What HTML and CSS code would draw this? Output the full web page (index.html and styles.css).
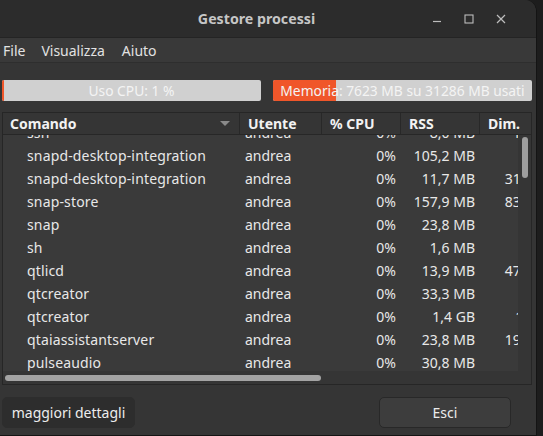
FILE: index.html
```html
<!DOCTYPE html>
<html lang="it">
<head>
<meta charset="utf-8">
<title>Gestore processi</title>
<link rel="stylesheet" href="styles.css">
</head>
<body>
<div class="window">
  <header class="titlebar">
    <div class="title">Gestore processi</div>
    <div class="controls">
      <span class="ctl"><svg width="10" height="10" viewBox="0 0 10 10"><path d="M1 7.5h8" stroke="#bdbdbd" stroke-width="1.2" fill="none"/></svg></span>
      <span class="ctl"><svg width="10" height="10" viewBox="0 0 10 10"><rect x="1" y="1" width="8" height="8" stroke="#bdbdbd" stroke-width="1.1" fill="none"/></svg></span>
      <span class="ctl"><svg width="10" height="10" viewBox="0 0 10 10"><path d="M1 1L9 9M9 1L1 9" stroke="#bdbdbd" stroke-width="1.2" fill="none"/></svg></span>
    </div>
  </header>
  <nav class="menubar">
    <span class="menu-item">File</span>
    <span class="menu-item">Visualizza</span>
    <span class="menu-item">Aiuto</span>
  </nav>
  <main class="content">
    <div class="meters">
      <div class="meter"><div class="fill" style="width:2px"></div><span class="meter-label">Uso CPU: 1 %</span></div>
      <div class="meter"><div class="fill" style="width:24.4%"></div><span class="meter-label">Memoria: 7623 MB su 31286 MB usati</span></div>
    </div>
    <div class="tree">
      <div class="thead">
        <div class="th th-cmd"><span>Comando</span><svg class="sort" width="10" height="5" viewBox="0 0 10 5"><path d="M0 0H10L5 5Z" fill="#8a8a8a"/></svg></div>
        <div class="th">Utente</div>
        <div class="th">% CPU</div>
        <div class="th">RSS</div>
        <div class="th th-last">Dim.</div>
      </div>
      <div class="scroller">
        <div class="viewport">
          <div class="rows">
            <div class="row"><span class="c-cmd">ssh</span><span class="c-user">andrea</span><span class="c-num">0%</span><span class="c-num">8,0 MB</span><span class="c-dim">16,7 MB</span></div>
            <div class="row"><span class="c-cmd">snapd-desktop-integration</span><span class="c-user">andrea</span><span class="c-num">0%</span><span class="c-num">105,2 MB</span><span class="c-dim">1,2 GB</span></div>
            <div class="row"><span class="c-cmd">snapd-desktop-integration</span><span class="c-user">andrea</span><span class="c-num">0%</span><span class="c-num">11,7 MB</span><span class="c-dim">311,8 MB</span></div>
            <div class="row"><span class="c-cmd">snap-store</span><span class="c-user">andrea</span><span class="c-num">0%</span><span class="c-num">157,9 MB</span><span class="c-dim">836,9 MB</span></div>
            <div class="row"><span class="c-cmd">snap</span><span class="c-user">andrea</span><span class="c-num">0%</span><span class="c-num">23,8 MB</span><span class="c-dim">1,8 GB</span></div>
            <div class="row"><span class="c-cmd">sh</span><span class="c-user">andrea</span><span class="c-num">0%</span><span class="c-num">1,6 MB</span><span class="c-dim">2,8 MB</span></div>
            <div class="row"><span class="c-cmd">qtlicd</span><span class="c-user">andrea</span><span class="c-num">0%</span><span class="c-num">13,9 MB</span><span class="c-dim">472,3 MB</span></div>
            <div class="row"><span class="c-cmd">qtcreator</span><span class="c-user">andrea</span><span class="c-num">0%</span><span class="c-num">33,3 MB</span><span class="c-dim">2,1 GB</span></div>
            <div class="row"><span class="c-cmd">qtcreator</span><span class="c-user">andrea</span><span class="c-num">0%</span><span class="c-num">1,4 GB</span><span class="c-dim">17,9 GB</span></div>
            <div class="row"><span class="c-cmd">qtaiassistantserver</span><span class="c-user">andrea</span><span class="c-num">0%</span><span class="c-num">23,8 MB</span><span class="c-dim">195,6 MB</span></div>
            <div class="row"><span class="c-cmd">pulseaudio</span><span class="c-user">andrea</span><span class="c-num">0%</span><span class="c-num">30,8 MB</span><span class="c-dim">1,3 GB</span></div>
          </div>
        </div>
        <div class="vtrough"><div class="vthumb"></div></div>
        <div class="htrough"><div class="hthumb"></div></div>
        <div class="corner"></div>
      </div>
    </div>
    <div class="actions">
      <button class="btn btn-flat">maggiori dettagli</button>
      <button class="btn btn-raised">Esci</button>
    </div>
  </main>
</div>
</body>
</html>
```

FILE: styles.css
```css
* { box-sizing: border-box; }
html, body { margin: 0; padding: 0; }
body {
  width: 543px;
  height: 436px;
  overflow: hidden;
  background: #1d1d1d;
  font-family: "Noto Sans", "DejaVu Sans", sans-serif;
  font-size: 14px;
  color: #e6e6e6;
}
.window {
  width: 537px;
  height: 436px;
  background: #353535;
  border-top-right-radius: 12px;
  border-right: 1px solid #141414;
  border-bottom: 1px solid #141414;
  overflow: hidden;
  display: flex;
  flex-direction: column;
}
.titlebar {
  height: 38px;
  flex: none;
  background: #2c2c2c;
  border-bottom: 1px solid #242424;
  display: flex;
  align-items: center;
}
.title {
  flex: 1;
  text-align: center;
  padding-left: 92px;
  font-weight: bold;
  font-size: 14.2px;
  color: #c6c6c6;
}
.controls {
  display: flex;
  margin-right: 19px;
}
.ctl {
  width: 32px;
  height: 30px;
  display: flex;
  align-items: center;
  justify-content: center;
}
.menubar {
  height: 25px;
  flex: none;
  background: #393939;
  border-bottom: 1px solid #2e2e2e;
  display: flex;
  align-items: center;
  padding-left: 3px;
  gap: 16px;
  color: #e2e2e2;
}
.menu-item:last-child { margin-left: 1px; }
.content {
  flex: 1;
  padding: 17px 4px 0 2px;
  display: flex;
  flex-direction: column;
}
.meters {
  display: flex;
  gap: 12px;
  height: 21px;
}
.meter {
  flex: 1;
  position: relative;
  background: #d0d0d0;
  border-radius: 2px;
  overflow: hidden;
  display: flex;
  align-items: center;
  justify-content: center;
}
.fill {
  position: absolute;
  left: 0;
  top: 0;
  bottom: 0;
  background: #f0562a;
}
.meter-label {
  position: relative;
  color: #f4f4f4;
  font-size: 13.8px;
}
.tree {
  margin-top: 11px;
  border: 1px solid #262626;
  background: #353535;
}
.thead {
  height: 22px;
  border-bottom: 1px solid #272727;
  display: grid;
  grid-template-columns: 237px 82px 79px 79px 1fr;
  font-weight: bold;
  color: #f2f2f2;
}
.th {
  border-right: 1px solid #282828;
  padding-left: 8px;
  line-height: 21px;
  white-space: nowrap;
}
.th-cmd {
  padding-left: 7px;
  display: flex;
  align-items: center;
  justify-content: space-between;
  padding-right: 9px;
}
.th-last { border-right: none; }
.scroller {
  display: grid;
  grid-template-columns: 1fr 13px;
  grid-template-rows: 236px 13px;
}
.viewport {
  overflow: hidden;
  background: #3a3a3a;
}
.rows { margin-top: -14px; width: 600px; }
.row {
  height: 23px;
  display: grid;
  grid-template-columns: 237px 82px 79px 79px 86px;
  align-items: center;
  white-space: nowrap;
  color: #e8e8e8;
}
.c-cmd { padding-left: 24px; letter-spacing: 0.15px; }
.c-user { padding-left: 5px; }
.c-num { text-align: right; padding-right: 5px; }
.c-dim { text-align: right; }
.vtrough {
  background: #353535;
  padding: 2px 3px 0 4px;
}
.vthumb {
  width: 6px;
  height: 41px;
  border-radius: 3px;
  background: #9e9e9e;
}
.htrough {
  background: #353535;
  padding: 4px 0 0 2px;
}
.hthumb {
  width: 316px;
  height: 6px;
  border-radius: 3px;
  background: #a3a3a3;
}
.corner { background: #353535; }
.actions {
  margin-top: 12px;
  display: flex;
  justify-content: space-between;
  padding-right: 21px;
}
.btn {
  height: 31px;
  font-family: inherit;
  font-size: 14px;
  color: #ececec;
  border-radius: 5px;
  padding: 0;
}
.btn-flat {
  width: 133px;
  background: #2d2d2d;
  border: 1px solid #2d2d2d;
}
.btn-raised {
  width: 132px;
  background: #3d3d3d;
  border: 1px solid #282828;
}
```
